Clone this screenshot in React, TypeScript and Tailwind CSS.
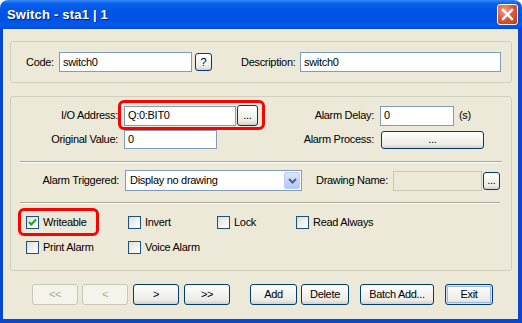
import type { ReactNode } from 'react'

function XpButton({
  children,
  className = '',
  disabled = false,
  isDefault = false,
}: {
  children: ReactNode
  className?: string
  disabled?: boolean
  isDefault?: boolean
}) {
  const base = disabled
    ? 'border-[#C9C7BA] text-[#ACA899] bg-[#F5F4EA]'
    : 'border-[#003C74] text-black bg-[linear-gradient(to_bottom,#FFFFFF_0%,#F4F4EF_45%,#ECEBE6_80%,#D6D0C5_100%)]'
  const focus = isDefault ? 'shadow-[inset_0_0_0_1px_#CEE7FF,inset_0_0_0_2px_#98B8EA]' : ''
  return (
    <div
      className={`flex shrink-0 items-center justify-center rounded-[3px] border text-[11px] leading-none ${base} ${focus} ${className}`}
    >
      {children}
    </div>
  )
}

function TextBox({ value = '', className = '', disabled = false }: { value?: string; className?: string; disabled?: boolean }) {
  return (
    <div
      className={`flex shrink-0 items-center border pl-[3px] text-[11px] leading-none ${
        disabled ? 'border-[#C9C7BA] bg-[#ECE9D8]' : 'border-[#7F9DB9] bg-white'
      } ${className}`}
    >
      {value}
    </div>
  )
}

function CheckBox({ label, checked = false, className = '' }: { label: string; checked?: boolean; className?: string }) {
  return (
    <div className={`flex shrink-0 items-center ${className}`}>
      <div className="relative h-[13px] w-[13px] border border-[#1C5180] bg-[linear-gradient(135deg,#DCDCD7_0%,#F4F4F2_60%,#FFFFFF_100%)]">
        {checked && (
          <svg className="absolute left-0 top-0" width="11" height="11" viewBox="0 0 11 11">
            <path d="M2 5 L4.3 7.5 L9 2.5" fill="none" stroke="#21A121" strokeWidth="2" />
          </svg>
        )}
      </div>
      <span className="ml-[4px] text-[11px] leading-none">{label}</span>
    </div>
  )
}

function Separator({ width }: { width: string }) {
  return <div className={`ml-[9px] h-[2px] border-t border-b border-t-[#ACA899] border-b-white ${width}`} />
}

export default function App() {
  return (
    <div className="relative h-[323px] w-[522px] bg-white font-['Liberation_Sans',Arial,sans-serif] text-black">
      <div className="flex h-full w-full flex-col overflow-hidden rounded-t-[8px]">
        {/* title bar */}
        <div className="flex h-[29px] shrink-0 items-center justify-between bg-[linear-gradient(to_bottom,#3A8CF8_0%,#0A5FEB_12%,#0054E6_40%,#0053E3_70%,#0059EE_88%,#0848D0_100%)] pl-[7px] pr-[4px]">
          <span className="text-[13px] font-bold tracking-[0.2px] text-white [text-shadow:1px_1px_0_#0A1F7A]">Switch - sta1 | 1</span>
          <div className="flex h-[21px] w-[21px] items-center justify-center rounded-[3px] border border-white bg-[radial-gradient(circle_at_35%_30%,#F0A58C_0%,#E2593A_45%,#C7340F_100%)]">
            <svg width="13" height="13" viewBox="0 0 13 13">
              <path d="M2 2 L11 11 M11 2 L2 11" stroke="white" strokeWidth="2.4" strokeLinecap="square" />
            </svg>
          </div>
        </div>

        {/* body */}
        <div className="flex flex-1 flex-col border-b-[4px] border-l-[3px] border-r-[4px] border-[#0848D0] bg-[#ECE9D8] tracking-[-0.3px]">
          {/* group 1 */}
          <div className="ml-[7px] mt-[12px] flex h-[42px] w-[502px] items-center rounded-[3px] border border-[#D0D0BF] pl-[15px]">
            <span className="w-[33px] text-[11px]">Code:</span>
            <TextBox value="switch0" className="h-[20px] w-[133px]" />
            <XpButton className="ml-[3px] h-[18px] w-[17px]">?</XpButton>
            <span className="ml-[29px] w-[59px] text-[11px]">Description:</span>
            <TextBox value="switch0" className="h-[20px] w-[201px]" />
          </div>

          {/* group 2 */}
          <div className="ml-[7px] mt-[13px] flex h-[175px] w-[502px] flex-col rounded-[3px] border border-[#D0D0BF]">
            <div className="mt-[8px] flex h-[21px] items-center">
              <span className="w-[107px] text-right text-[11px]">I/O Address:</span>
              <TextBox value="Q:0:BIT0" className="ml-[6px] h-[20px] w-[112px]" />
              <XpButton className="ml-[1px] h-[21px] w-[21px]">...</XpButton>
              <span className="w-[116px] text-right text-[11px]">Alarm Delay:</span>
              <TextBox value="0" className="ml-[6px] h-[20px] w-[74px]" />
              <span className="ml-[5px] text-[11px]">(s)</span>
            </div>
            <div className="mt-[4px] flex h-[19px] items-center">
              <span className="w-[107px] text-right text-[11px]">Original Value:</span>
              <TextBox value="0" className="ml-[6px] h-[19px] w-[93px]" />
              <span className="w-[157px] text-right text-[11px]">Alarm Process:</span>
              <XpButton className="ml-[7px] h-[18px] w-[103px]">...</XpButton>
            </div>

            <div className="mt-[12px]">
              <Separator width="w-[482px]" />
            </div>

            <div className="mt-[7px] flex h-[21px] items-center">
              <span className="w-[108px] text-right text-[11px]">Alarm Triggered:</span>
              <div className="ml-[6px] flex h-[21px] w-[177px] items-center border border-[#7F9DB9] bg-white">
                <span className="flex-1 pl-[4px] text-[11px]">Display no drawing</span>
                <div className="mr-[1px] flex h-[17px] w-[16px] items-center justify-center rounded-[2px] border border-[#B9CDF8] bg-[linear-gradient(to_bottom,#DCE7FE_0%,#C1D3FB_60%,#B3C8F5_100%)]">
                  <svg width="9" height="6" viewBox="0 0 9 6">
                    <path d="M1 1 L4.5 4.5 L8 1" fill="none" stroke="#4D6185" strokeWidth="2" />
                  </svg>
                </div>
              </div>
              <span className="ml-[14px] w-[77px] text-[11px]">Drawing Name:</span>
              <TextBox disabled className="h-[20px] w-[89px]" />
              <XpButton className="ml-[1px] h-[18px] w-[17px]">...</XpButton>
            </div>

            <div className="mt-[11px]">
              <Separator width="w-[480px]" />
            </div>

            <div className="ml-[15px] mt-[12px] flex h-[13px] items-center">
              <CheckBox label="Writeable" checked className="w-[102px]" />
              <CheckBox label="Invert" className="w-[89px]" />
              <CheckBox label="Lock" className="w-[79px]" />
              <CheckBox label="Read Always" />
            </div>
            <div className="ml-[15px] mt-[12px] flex h-[13px] items-center">
              <CheckBox label="Print Alarm" className="w-[102px]" />
              <CheckBox label="Voice Alarm" />
            </div>
          </div>

          {/* bottom buttons */}
          <div className="ml-[29px] mt-[13px] flex h-[21px] items-center">
            <XpButton disabled className="h-[21px] w-[46px]">&lt;&lt;</XpButton>
            <XpButton disabled className="ml-[4px] h-[21px] w-[46px]">&lt;</XpButton>
            <XpButton className="ml-[5px] h-[21px] w-[46px]">&gt;</XpButton>
            <XpButton className="ml-[5px] h-[21px] w-[46px]">&gt;&gt;</XpButton>
            <XpButton className="ml-[20px] h-[21px] w-[47px]">Add</XpButton>
            <XpButton className="ml-[4px] h-[21px] w-[48px]">Delete</XpButton>
            <XpButton className="ml-[11px] h-[21px] w-[74px]">Batch Add...</XpButton>
            <XpButton isDefault className="ml-[11px] h-[21px] w-[48px]">Exit</XpButton>
          </div>
        </div>
      </div>

      {/* red highlight marks */}
      <div className="absolute left-[118px] top-[100px] h-[30px] w-[147px] rounded-[6px] border-[3px] border-[#FF0000]" />
      <div className="absolute left-[18px] top-[208px] h-[28px] w-[81px] rounded-[6px] border-[3px] border-[#FF0000]" />
    </div>
  )
}
